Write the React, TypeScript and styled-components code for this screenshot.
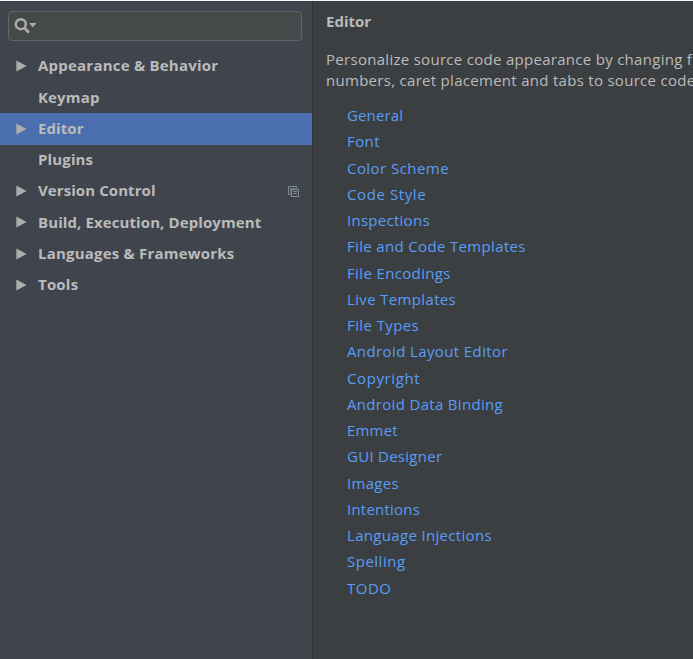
import React from 'react';
import styled, { createGlobalStyle } from 'styled-components';

const GlobalStyle = createGlobalStyle`
  * { box-sizing: border-box; }
  body { margin: 0; background: #3c3f41; overflow: hidden; }
`;

const Window = styled.div`
  display: flex;
  width: 693px;
  height: 659px;
  overflow: hidden;
  border-top: 1px solid #f4f6f6;
  background: #3c3f41;
  color: #bbbbbb;
  font-family: 'Open Sans', 'Noto Sans', sans-serif;
  font-size: 15px;
`;

const Sidebar = styled.aside`
  flex: 0 0 313px;
  border-right: 1px solid #323435;
  background: #40444c;
  padding-top: 10px;
`;

const SearchField = styled.div`
  display: flex;
  align-items: center;
  width: 294px;
  height: 30px;
  margin: 0 0 9.9px 8px;
  padding: 0 0 1px 5px;
  border: 1px solid #636665;
  border-radius: 4px;
  background: #45494a;
`;

const TreeRow = styled.div<{ $selected?: boolean }>`
  display: flex;
  align-items: center;
  height: 31.25px;
  padding: 0 12px 0 16px;
  background: ${(p) => (p.$selected ? '#4b6eaf' : 'transparent')};
`;

const ArrowSlot = styled.span`
  display: flex;
  width: 22px;
  padding-bottom: 1px;
`;

const RowLabel = styled.span<{ $tracking: number }>`
  flex: 1;
  padding-bottom: 2.5px;
  font-weight: 700;
  line-height: 20px;
  letter-spacing: ${(p) => p.$tracking}px;
  white-space: nowrap;
`;

const Content = styled.main`
  flex: 1;
  min-width: 0;
  padding: 10px 0 0 13px;
  overflow: hidden;
`;

const Title = styled.h1`
  margin: 0 0 17px;
  font-size: 15px;
  line-height: 21px;
  font-weight: 700;
`;

const Description = styled.p`
  margin: 0 0 11px;
  line-height: 21px;
  letter-spacing: 0.29px;
  white-space: nowrap;
`;

const LinkList = styled.ul`
  margin: 0;
  padding: 0 0 0 21px;
  list-style: none;
`;

const LinkItem = styled.li<{ $tracking: number }>`
  height: 26.25px;
  line-height: 26px;
  letter-spacing: ${(p) => p.$tracking}px;
  color: #589df6;
  white-space: nowrap;
`;

const SearchIcon = () => (
  <svg width="24" height="18" viewBox="0 0 24 18">
    <circle cx="6.8" cy="7.2" r="5" fill="none" stroke="#adadad" strokeWidth="2.4" />
    <path d="M10.4 11 L14.8 15.4" stroke="#adadad" strokeWidth="2.8" />
    <path d="M15 6 H22.6 L18.8 10.2 Z" fill="#adadad" />
  </svg>
);

const Arrow = () => (
  <svg width="11" height="12" viewBox="0 0 11 12">
    <path d="M0.3 0.5 L10.6 6 L0.3 11.5 Z" fill="#adadad" />
  </svg>
);

const ProjectIcon = () => (
  <svg width="12" height="12" viewBox="0 0 12 12" fill="none" stroke="#7f8b91">
    <path d="M2.5 8.5 H0.5 V0.5 H8.5 V2.5" />
    <path d="M2.5 8.5 V2.5 H8.5" strokeOpacity="0.6" />
    <rect x="3.5" y="3.5" width="7" height="7" />
    <path d="M5 5.5 H9 M5 7.5 H9" />
  </svg>
);

const sections = [
  { label: 'Appearance & Behavior', tracking: 0.22, expandable: true },
  { label: 'Keymap', tracking: 0.15 },
  { label: 'Editor', tracking: 0.08, expandable: true, selected: true },
  { label: 'Plugins', tracking: 0.14 },
  { label: 'Version Control', tracking: 0.08, expandable: true, project: true },
  { label: 'Build, Execution, Deployment', tracking: 0.1, expandable: true },
  { label: 'Languages & Frameworks', tracking: 0.2, expandable: true },
  { label: 'Tools', tracking: 0.2, expandable: true },
];

const pages = [
  { label: 'General', tracking: 0.12 },
  { label: 'Font', tracking: 0.4 },
  { label: 'Color Scheme', tracking: 0.45 },
  { label: 'Code Style', tracking: 0.6 },
  { label: 'Inspections', tracking: 0.27 },
  { label: 'File and Code Templates', tracking: 0.34 },
  { label: 'File Encodings', tracking: 0.36 },
  { label: 'Live Templates', tracking: 0.35 },
  { label: 'File Types', tracking: 0.4 },
  { label: 'Android Layout Editor', tracking: 0.39 },
  { label: 'Copyright', tracking: 0.6 },
  { label: 'Android Data Binding', tracking: 0.32 },
  { label: 'Emmet', tracking: 0.2 },
  { label: 'GUI Designer', tracking: 0.27 },
  { label: 'Images', tracking: 0.3 },
  { label: 'Intentions', tracking: 0.22 },
  { label: 'Language Injections', tracking: 0.32 },
  { label: 'Spelling', tracking: 0.5 },
  { label: 'TODO', tracking: 0.5 },
];

export default function App() {
  return (
    <>
      <GlobalStyle />
      <Window>
        <Sidebar>
          <SearchField>
            <SearchIcon />
          </SearchField>
          {sections.map((s) => (
            <TreeRow key={s.label} $selected={s.selected}>
              <ArrowSlot>{s.expandable && <Arrow />}</ArrowSlot>
              <RowLabel $tracking={s.tracking}>{s.label}</RowLabel>
              {s.project && <ProjectIcon />}
            </TreeRow>
          ))}
        </Sidebar>
        <Content>
          <Title>Editor</Title>
          <Description>
            Personalize source code appearance by changing f
            <br />
            numbers, caret placement and tabs to source code
          </Description>
          <LinkList>
            {pages.map((page) => (
              <LinkItem key={page.label} $tracking={page.tracking}>
                {page.label}
              </LinkItem>
            ))}
          </LinkList>
        </Content>
      </Window>
    </>
  );
}
